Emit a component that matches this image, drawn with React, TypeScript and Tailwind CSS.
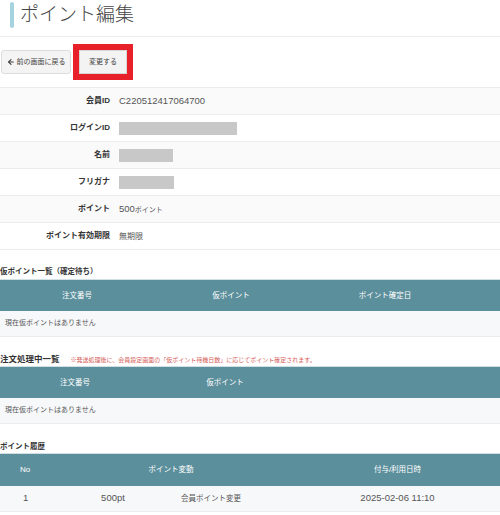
import React from 'react';
import { ArrowLeft } from 'lucide-react';

const font = { fontFamily: '"Liberation Sans", "Noto Sans CJK JP", sans-serif' };

// Member info rows
const infoRows: { label: string; value?: React.ReactNode; bar?: number }[] = [
  { label: '会員ID', value: 'C220512417064700' },
  { label: 'ログインID', bar: 118 },
  { label: '名前', bar: 54 },
  { label: 'フリガナ', bar: 55 },
  { label: 'ポイント', value: <>500<span className="text-[7px]">ポイント</span></> },
  { label: 'ポイント有効期限', value: <span className="text-[8px]">無期限</span> },
];

const EmptyRow = () => (
  <div className="h-[26px] flex items-center pl-[5px] bg-[#f7f8fa] border-b border-[#ececec] text-[7px] text-[#555]">
    現在仮ポイントはありません
  </div>
);

export default function App() {
  return (
    <div className="w-[500px] bg-white text-[#333]" style={font}>
      {/* Title */}
      <div className="h-[37px] flex items-start pt-[2px] pl-[10px] border-b border-[#ececec]">
        <div className="w-[4px] h-[26px] rounded-sm bg-[#a5d3df]" />
        <h1 className="ml-[6px] leading-[26px] text-[19px] font-light text-[#444]">ポイント編集</h1>
      </div>

      {/* Buttons */}
      <div className="h-[51px] flex items-center pl-[1px] gap-[2px] border-b border-[#ececec]">
        <button className="h-[24px] w-[70px] flex items-center justify-center gap-[2px] rounded-[3px] border border-[#dcdcdc] bg-[#f4f4f4] text-[7px] text-[#444]">
          <ArrowLeft size={8} strokeWidth={3.5} />
          前の画面に戻る
        </button>
        <div className="border-[6px] border-[#e8202a]">
          <button className="h-[24px] w-[48px] flex items-center justify-center border border-[#d6d6d6] bg-[#f3f3f3] text-[7px] text-[#444]">
            変更する
          </button>
        </div>
      </div>

      {/* Info table */}
      <div>
        {infoRows.map((row, i) => (
          <div
            key={row.label}
            className={`h-[27px] flex items-center border-b border-[#ececec] ${i % 2 === 0 ? 'bg-[#fafafb]' : 'bg-white'}`}
          >
            <div className="w-[110px] text-right font-bold text-[8px] text-[#333]">{row.label}</div>
            <div className="pl-[9px] text-[9.5px] text-[#555]">
              {row.bar ? (
                <div className="h-[13px] bg-[#c8c8c8]" style={{ width: row.bar }} />
              ) : (
                row.value
              )}
            </div>
          </div>
        ))}
      </div>

      {/* Pending points */}
      <div className="mt-[15px] h-[14px] text-[7.5px] font-bold leading-[14px]">仮ポイント一覧（確定待ち）</div>
      <div className="h-[32px] grid grid-cols-[154px_154px_154px_1fr] items-center bg-[#5c8f9c] border-t border-[#cfdfe3] text-white text-[7.5px]">
        <div className="text-center">注文番号</div>
        <div className="text-center">仮ポイント</div>
        <div className="text-center">ポイント確定日</div>
        <div />
      </div>
      <EmptyRow />

      {/* Orders in process */}
      <div className="mt-[15px] h-[14px] flex items-end gap-[11px]">
        <span className="text-[8.5px] font-bold leading-[14px]">注文処理中一覧</span>
        <span className="text-[6px] leading-[12px] text-[#d5605a]">
          ※発送処理後に、会員設定画面の「仮ポイント待機日数」に応じてポイント確定されます。
        </span>
      </div>
      <div className="h-[32px] grid grid-cols-[150px_150px_1fr] items-center bg-[#5c8f9c] border-t border-[#cfdfe3] text-white text-[7.5px]">
        <div className="text-center">注文番号</div>
        <div className="text-center">仮ポイント</div>
        <div />
      </div>
      <EmptyRow />

      {/* Point history */}
      <div className="mt-[16px] h-[13px] text-[7.5px] font-bold leading-[13px]">ポイント履歴</div>
      <div className="h-[33px] grid grid-cols-[73px_196px_1fr] items-center bg-[#5c8f9c] border-t border-[#cfdfe3] text-white text-[7.5px]">
        <div className="pl-[20px] text-[8px]">No</div>
        <div className="text-center">ポイント変動</div>
        <div className="text-center pl-[26px]">付与/利用日時</div>
      </div>
      <div className="h-[26px] grid grid-cols-[73px_80px_116px_1fr] items-center bg-[#f7f8fa] border-b border-[#ececec] text-[#555]">
        <div className="pl-[23px] text-[9.5px]">1</div>
        <div className="text-center text-[9.5px]">500pt</div>
        <div className="text-center text-[7.5px]">会員ポイント変更</div>
        <div className="text-center pl-[26px] text-[9.5px]">2025-02-06 11:10</div>
      </div>
    </div>
  );
}
